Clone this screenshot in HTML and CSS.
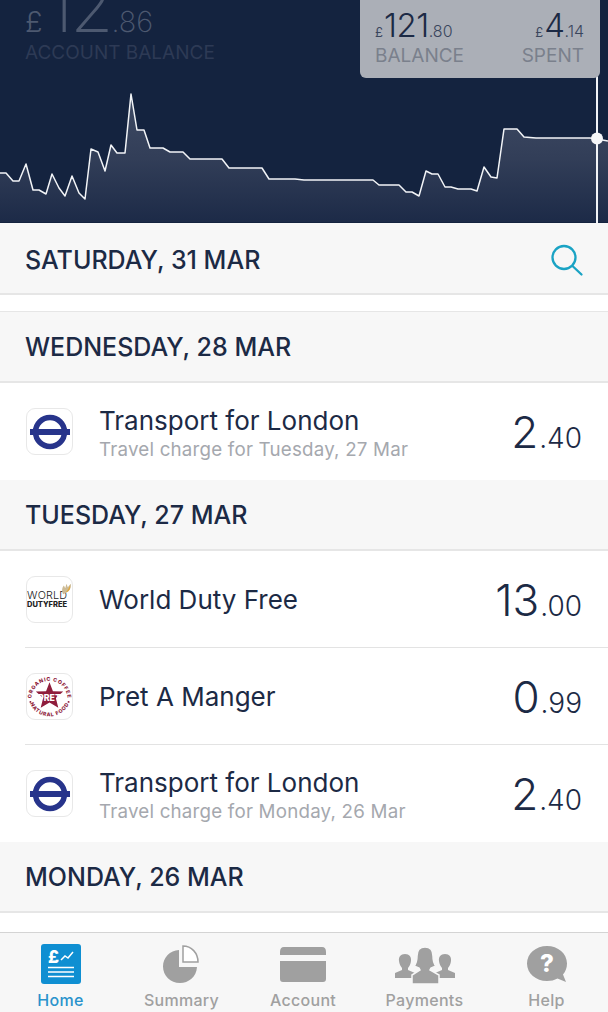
FILE: index.html
```html
<!DOCTYPE html>
<html lang="en">
<head>
<meta charset="utf-8">
<title>Home</title>
<link rel="stylesheet" href="styles.css">
</head>
<body>
<div class="app">
  <section class="hero">
    <div class="balance">
      <div class="balance-amount"><span class="cur">£</span><span class="big">12</span><span class="pence">.86</span></div>
      <div class="balance-label">ACCOUNT BALANCE</div>
    </div>
    <svg class="chart" width="608" height="223" viewBox="0 0 608 223">
      <defs>
        <linearGradient id="fade" gradientUnits="userSpaceOnUse" x1="0" y1="94" x2="0" y2="223">
          <stop offset="0" stop-color="#3f4b64"/>
          <stop offset="0.5" stop-color="#323e58"/>
          <stop offset="1" stop-color="#1c2a47"/>
        </linearGradient>
      </defs>
      <path fill="url(#fade)" d="M0 173 6 173 13 181 19 181 26 164 33 190 39 190 46 194 52 174 59 188 65 196 72 176 79 193 85 199 91 149 98 152 105 171 111 145 117 153 125 153 131 94 137 130 144 130 150 148 163 148 170 152 183 152 190 159 222 159 229 168 262 168 269 179 295 179 304 180 373 180 379 185 399 185 406 192 412 192 419 196 426 171 432 174 438 174 445 187 451 187 458 189 471 189 477 191 484 167 491 177 497 178 504 129 517 129 524 137 536 138 590 138 597 139 608 141V222H0Z"/>
      <path fill="none" stroke="#f2f4f7" stroke-width="1.500" stroke-linejoin="round" d="M0 173 6 173 13 181 19 181 26 164 33 190 39 190 46 194 52 174 59 188 65 196 72 176 79 193 85 199 91 149 98 152 105 171 111 145 117 153 125 153 131 94 137 130 144 130 150 148 163 148 170 152 183 152 190 159 222 159 229 168 262 168 269 179 295 179 304 180 373 180 379 185 399 185 406 192 412 192 419 196 426 171 432 174 438 174 445 187 451 187 458 189 471 189 477 191 484 167 491 177 497 178 504 129 517 129 524 137 536 138 590 138 597 139 608 141"/>
      <path stroke="#f2f4f7" stroke-width="2" d="M597 76V223"/>
      <circle cx="597" cy="138.500" r="6" fill="#f5f6f8"/>
    </svg>
    <div class="tip">
      <div class="tip-col">
        <div class="tip-amount"><span class="tip-cur">£</span><span class="tip-big">121</span><span class="tip-pence">.80</span></div>
        <div class="tip-label">BALANCE</div>
      </div>
      <div class="tip-col tip-right">
        <div class="tip-amount"><span class="tip-cur">£</span><span class="tip-big">4</span><span class="tip-pence">.14</span></div>
        <div class="tip-label">SPENT</div>
      </div>
    </div>
  </section>

  <header class="day day-top">
    <span>SATURDAY, 31 MAR</span>
    <svg class="search" width="34" height="34" viewBox="0 0 34 34" fill="none" stroke="#1aa3c4" stroke-width="2.300">
      <circle cx="14" cy="14.500" r="11.500"/>
      <path d="M22.500 23 31.500 31.500" stroke-linecap="round"/>
    </svg>
  </header>

  <main class="list">
    <div class="day day-first"><span>WEDNESDAY, 28 MAR</span></div>
    <div class="row">
      <div class="logo">
        <svg width="44" height="40" viewBox="0 0 44 40"><circle cx="22" cy="20" r="14.500" fill="none" stroke="#27348b" stroke-width="5.500"/><rect x="2" y="17" width="40" height="6" fill="#27348b"/></svg>
      </div>
      <div class="info info-two"><div class="name">Transport for London</div><div class="sub">Travel charge for Tuesday, 27 Mar</div></div>
      <div class="amt"><span class="amt-big">2</span><span class="amt-small">.40</span></div>
    </div>
    <div class="day"><span>TUESDAY, 27 MAR</span></div>
    <div class="row">
      <div class="logo logo-wdf">
        <svg class="wing" width="11" height="12" viewBox="0 0 12 14"><path fill="#cdbb95" d="M2 13C0 9 1 5 3 3L4.500 6 6 1 7.500 5 11 1C12 6 9 11 2 13Z"/><path fill="#e0a83c" d="M5 11C7 9 9 6 10 3 11 7 9 10 5 11Z"/></svg>
        <div class="wdf-a">WORLD</div>
        <div class="wdf-b">DUTYFREE</div>
      </div>
      <div class="info"><div class="name">World Duty Free</div></div>
      <div class="amt"><span class="amt-big">13</span><span class="amt-small">.00</span></div>
    </div>
    <div class="row">
      <div class="logo">
        <svg width="46" height="46" viewBox="0 0 46 46">
          <defs>
            <path id="ring-top" d="M4.500 25A18.500 18.500 0 0 1 41.500 25"/>
            <path id="ring-bottom" d="M2 26A21.500 21.500 0 0 0 44 26"/>
          </defs>
          <text class="pret-ring" text-anchor="middle"><textPath href="#ring-top" startOffset="50%">ORGANIC COFFEE</textPath></text>
          <text class="pret-ring" text-anchor="middle"><textPath href="#ring-bottom" startOffset="50%">NATURAL FOOD</textPath></text>
          <circle cx="3.500" cy="28" r="1" fill="#8f1d3c"/>
          <circle cx="42.500" cy="28" r="1" fill="#8f1d3c"/>
          <path fill="#8f1d3c" d="M23 8 26.500 17 37 17.500 29.500 24 32 34 23 28.500 14 34 16.500 24 9 17.500 19.500 17Z"/>
          <text class="pret-word" x="23" y="27" text-anchor="middle">PRET</text>
        </svg>
      </div>
      <div class="info"><div class="name">Pret A Manger</div></div>
      <div class="amt"><span class="amt-big">0</span><span class="amt-small">.99</span></div>
    </div>
    <div class="row">
      <div class="logo">
        <svg width="44" height="40" viewBox="0 0 44 40"><circle cx="22" cy="20" r="14.500" fill="none" stroke="#27348b" stroke-width="5.500"/><rect x="2" y="17" width="40" height="6" fill="#27348b"/></svg>
      </div>
      <div class="info info-two"><div class="name">Transport for London</div><div class="sub">Travel charge for Monday, 26 Mar</div></div>
      <div class="amt"><span class="amt-big">2</span><span class="amt-small">.40</span></div>
    </div>
    <div class="day"><span>MONDAY, 26 MAR</span></div>
  </main>

  <nav class="tabs">
    <div class="tab tab-on">
      <svg width="40" height="40" viewBox="0 0 40 40">
        <rect width="40" height="40" rx="3" fill="#0f8fd2"/>
        <text class="home-pound" x="7" y="19">£</text>
        <path d="M20 16 24 12 27 14 32 8" fill="none" stroke="#fff" stroke-width="1.500"/>
        <path d="M7 23.500H33M7 28H33M7 32.500H33" stroke="#fff" stroke-width="1.500"/>
      </svg>
      <span>Home</span>
    </div>
    <div class="tab">
      <svg width="40" height="40" viewBox="0 0 40 40">
        <path fill="#a0a0a0" d="M17 6V23H35C34.500 33 26.500 39 18 39 8.500 39 1 31.500 1 22.500 1 13.500 8 6.500 17 6Z"/>
        <path fill="#fff" stroke="#a0a0a0" stroke-width="1.500" d="M21 2C29.500 2 36 9 36 18H21Z"/>
      </svg>
      <span>Summary</span>
    </div>
    <div class="tab">
      <svg width="48" height="40" viewBox="0 0 48 40">
        <path fill="#a0a0a0" d="M1 8Q1 3 5 3H43Q47 3 47 8V11H1ZM1 17H47V35Q47 38 44 38H4Q1 38 1 35Z"/>
      </svg>
      <span>Account</span>
    </div>
    <div class="tab">
      <svg width="62" height="40" viewBox="0 0 62 40">
        <path fill="#a0a0a0" d="M11 10C15.500 10 17.500 13 17 17 16.700 20 15.500 22 14 24V26L21 29V34H1V29L8 26V24C6.500 22 5.300 20 5 17 4.500 13 6.500 10 11 10Z"/>
        <path fill="#a0a0a0" d="M51 10C55.500 10 57.500 13 57 17 56.700 20 55.500 22 54 24V26L61 29V34H41V29L48 26V24C46.500 22 45.300 20 45 17 44.500 13 46.500 10 51 10Z"/>
        <path fill="#a0a0a0" stroke="#f7f7f7" stroke-width="1.500" d="M31 3C37 3 39 7 39 12 39 17 40 20 42 22L37 24 36 26 45 31V40H18V31L26 26 25 24 20 22C22 20 23 17 23 12 23 7 25 3 31 3Z"/>
      </svg>
      <span>Payments</span>
    </div>
    <div class="tab">
      <svg width="42" height="40" viewBox="0 0 42 40">
        <path fill="#a0a0a0" d="M21 2C32 2 41 9.500 41 19.500 41 24 39.500 27.500 37 30.500L40 38 31.500 34.500C28.500 36.200 25 37 21 37 10 37 1 29.500 1 19.500 1 9.500 10 2 21 2Z"/>
        <text class="help-q" x="21" y="28" text-anchor="middle">?</text>
      </svg>
      <span>Help</span>
    </div>
  </nav>
</div>
</body>
</html>
```
FILE: styles.css
```css
* { box-sizing: border-box; }
html, body { margin: 0; padding: 0; }
body { font-family: Inter, "Liberation Sans", sans-serif; color: #1c2a45; background: #fff; }
.app { width: 608px; height: 1012px; overflow: hidden; display: flex; flex-direction: column; }

.hero { position: relative; height: 223px; flex: none; background: #14233f; overflow: hidden; }
.balance { position: relative; z-index: 1; padding-left: 25px; margin-top: -18px; color: #4d5970; }
.balance-amount { height: 50px; line-height: 50px; white-space: nowrap; display: flex; align-items: baseline; }
.cur { font-size: 29px; font-weight: 300; margin-right: 4px; }
.big { font-size: 70px; font-weight: 200; line-height: 50px; letter-spacing: -3px; margin-right: 1px; }
.pence { font-size: 29px; font-weight: 200; }
.balance-label { font-size: 19px; line-height: 24px; margin-top: 9px; color: #2d3a55; }
.chart { position: absolute; left: 0; top: 0; display: block; }

.tip { position: absolute; top: 0; left: 360px; width: 240px; height: 78px; background: #abafb7; border-radius: 0 0 6px 6px; display: flex; justify-content: space-between; padding: 7px 16px 0 15px; }
.tip-amount { display: flex; align-items: baseline; height: 36px; line-height: 36px; color: #1c2a45; }
.tip-cur { font-size: 13px; font-weight: 400; color: #3a465d; margin-right: 1px; }
.tip-big { font-size: 33px; font-weight: 300; letter-spacing: -0.500px; }
.tip-pence { font-size: 16px; font-weight: 300; color: #3a465d; }
.tip-label { font-size: 19px; line-height: 24px; color: #7a808c; margin-top: 1px; }
.tip-right { display: flex; flex-direction: column; align-items: flex-end; }

.day { height: 72px; flex: none; display: flex; align-items: center; justify-content: space-between; padding: 0 25px; background: #f7f7f7; border-bottom: 2px solid #e6e6e6; border-top: 1px solid #e6e6e6; font-size: 25px; font-weight: 500; margin-top: -1px; }
.day-top { border-top: 0; margin-top: 0; padding-top: 3px; padding-right: 24px; }
.day-first { margin-top: 16px; }
.search { display: block; }
.list { flex: 1; min-height: 0; }

.row { height: 97px; display: flex; align-items: center; padding: 0 26px 0 26px; background: #fff; position: relative; }
.row + .row::before { content: ""; position: absolute; left: 25px; right: 0; top: -1px; height: 1px; background: #e3e3e3; }
.logo { width: 47px; height: 47px; flex: none; border: 1px solid #e8e8e8; border-radius: 9px; display: flex; align-items: center; justify-content: center; overflow: hidden; background: #fff; }
.logo-wdf { flex-direction: column; position: relative; align-items: flex-start; }
.wing { position: absolute; right: 0; top: 6px; }
.wdf-a { font-size: 10.800px; line-height: 10px; font-weight: 300; color: #222; letter-spacing: 0.200px; }
.wdf-b { font-size: 7.500px; line-height: 8px; font-weight: 800; color: #222; }
.pret-ring { font-size: 5.300px; font-weight: 800; fill: #8f1d3c; letter-spacing: 0.700px; }
.pret-word { font-size: 9px; font-weight: 800; fill: #fff; }
.info { margin-left: 26px; flex: 1; min-width: 0; }
.info-two { padding-top: 4px; }
.name { font-size: 26px; line-height: 32px; font-weight: 400; }
.sub { font-size: 18.750px; line-height: 24px; color: #a5a8ae; letter-spacing: 0.200px; margin-top: 1px; }
.amt { white-space: nowrap; display: flex; align-items: baseline; }
.amt-big { font-size: 44px; font-weight: 300; margin-right: 1px; }
.amt-small { font-size: 28px; font-weight: 300; }

.tabs { height: 80px; flex: none; display: grid; grid-template-columns: 121px 121px 122px 121px 123px; background: #f7f7f7; border-top: 1px solid #d4d4d4; padding-top: 11px; }
.tab { display: flex; flex-direction: column; align-items: center; color: #a0a0a0; font-size: 16px; font-weight: 500; letter-spacing: 0.300px; }
.tab svg { display: block; }
.tab span { margin-top: 6px; line-height: 20px; }
.tab-on { color: #2a93cc; }
.home-pound { font-size: 17px; font-weight: 800; fill: #fff; }
.help-q { font-size: 24px; font-weight: 800; fill: #fff; }
```
